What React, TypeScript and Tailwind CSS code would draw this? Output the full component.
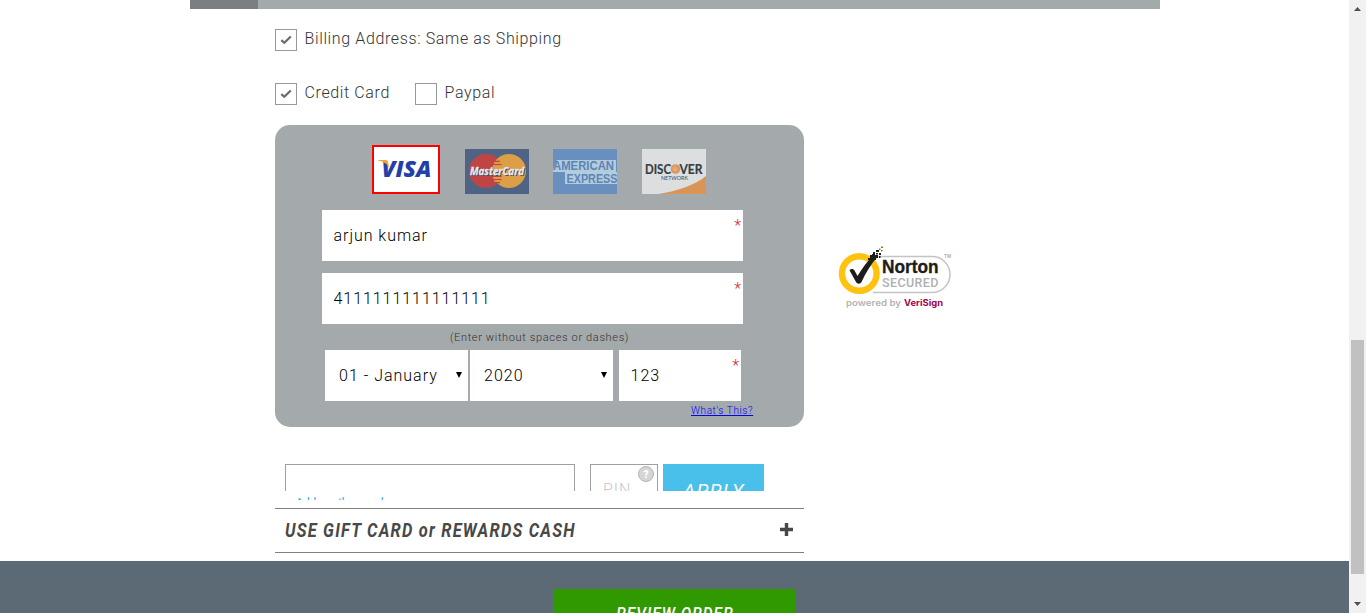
import React from "react";

function CheckBox({ checked = false, label }: { checked?: boolean; label: string }) {
  return (
    <div className="flex h-[22px] items-start gap-2">
      <span className="flex size-[22px] items-center justify-center border border-[#999] bg-white">
        {checked && (
          <svg width="12" height="10" viewBox="0 0 12 10">
            <path d="M1.300 5.200 4.300 7.800 10.800 1.500" fill="none" stroke="#6b6b6b" strokeWidth="2.200" />
          </svg>
        )}
      </span>
      <span className="-mt-px -ml-[0.500px] text-base leading-[22px] font-light tracking-[0.63px] text-[#333]">{label}</span>
    </div>
  );
}

function Visa() {
  return (
    <svg width="64" height="45" viewBox="0 0 64 45">
      <rect width="64" height="45" fill="#fff" />
      <text x="7.500" y="30" textLength="50" lengthAdjust="spacingAndGlyphs" fontFamily="Open Sans" fontWeight="800" fontStyle="italic" fontSize="23" fill="#2340a8">VISA</text>
      <path d="M4 13h7.500c1.500 0 2.200.7 2.500 2l1.200 6c-1.700-3.500-5.200-6.500-11.200-7.500z" fill="#f0a431" />
    </svg>
  );
}

function MasterCard() {
  return (
    <svg width="64" height="45" viewBox="0 0 64 45">
      <rect width="64" height="45" fill="#4f6384" />
      <circle cx="21" cy="22" r="17" fill="#bf4545" />
      <circle cx="44" cy="22" r="17" fill="#dc9f48" />
      <path d="M29 12.500h6M27.500 15.500h9M27.500 27.500h9M27.500 30.500h9M29 33.500h6" stroke="#bf4545" strokeWidth="1.400" />
      <path d="M29.500 14h6M28 17h8M28 29h8M29 32h6" stroke="#dc9f48" strokeWidth="1.300" />
      <g fontFamily="Open Sans" fontWeight="700" fontStyle="italic" fontSize="10.800">
        <text x="6" y="27" textLength="54" lengthAdjust="spacingAndGlyphs" fill="#384466">MasterCard</text>
        <text x="5" y="26" textLength="54" lengthAdjust="spacingAndGlyphs" fill="#e8e8ec" stroke="#e8e8ec" strokeWidth=".3">MasterCard</text>
      </g>
    </svg>
  );
}

function Amex() {
  return (
    <svg width="64" height="45" viewBox="0 0 64 45">
      <rect width="64" height="45" fill="#688fbd" />
      <path d="M0 20.500 4 11H63V23H0zM12 23H64V35H12z" fill="#b3ccdd" />
      <g fontFamily="Liberation Sans" fontWeight="700" fontSize="12" fill="#5c85b6">
        <text x="0" y="21.300" textLength="61" lengthAdjust="spacingAndGlyphs">AMERICAN</text>
        <text x="13.500" y="33.500" textLength="51" lengthAdjust="spacingAndGlyphs">EXPRESS</text>
      </g>
    </svg>
  );
}

function Discover() {
  return (
    <svg width="64" height="45" viewBox="0 0 64 45">
      <rect width="64" height="45" fill="#dcdee0" />
      <path d="M16 45C36 42 53 36 64 27V45z" fill="#d99557" />
      <circle cx="33.500" cy="20" r="4.800" fill="#dc965e" />
      <circle cx="33" cy="20" r="2.500" fill="#e2aa7e" />
      <g fontFamily="Lato" fontWeight="700" fontSize="12.500" fill="#363e44" stroke="#363e44" strokeWidth=".2">
        <text x="3" y="24.500" textLength="26" lengthAdjust="spacingAndGlyphs">DISC</text>
        <text x="37.500" y="24.500" textLength="23" lengthAdjust="spacingAndGlyphs">VER</text>
      </g>
      <text x="19" y="30.500" textLength="27" lengthAdjust="spacingAndGlyphs" fontFamily="Lato" fontSize="5" fill="#42484c">NETWORK</text>
    </svg>
  );
}

function NortonSeal() {
  return (
    <svg width="116" height="66" viewBox="0 0 116 66">
      <path d="M40 11.500H95a18 18 0 0 1 0 36H36" fill="none" stroke="#c4c4c4" strokeWidth="1.500" />
      <circle cx="22.300" cy="28.500" r="17.300" fill="#fff" stroke="#ffc20e" strokeWidth="6.400" />
      <path d="M12.500 25.300c1.500-2 4-1.800 5 .3l3 5.500C25.500 23 30 16.500 36 11l3.500 2C34 19.500 29 27 24.500 37c-1 2.300-4.300 2.300-5.500 0z" fill="#1d1d1b" />
      <path d="M33 10h3v3h-3zM36 7h2v3h-2zM38 10h3v3h-3zM36 12h3v3h-3zM39 5h3v2h-3zM42 8h2v2h-2zM35 9h3v3h-3zM31 13h3v2h-3zM42 11h1.500v2H42zM39 8h2v1.500h-2z" fill="#1d1d1b" />
      <path d="M42 3.500h1.500V5H42zM44 1.500h2V3h-2zM44 5h1.500v1.500H44z" fill="#8f7930" />
      <text x="45" y="28" textLength="56.500" lengthAdjust="spacingAndGlyphs" fontFamily="Liberation Sans" fontWeight="700" fontSize="17.500" fill="#1d1d1b" stroke="#1d1d1b" strokeWidth=".35">Norton</text>
      <text x="45" y="41.500" textLength="56.500" fontFamily="Roboto" fontWeight="500" fontSize="12.500" fill="#b0b0b0">SECURED</text>
      <text x="107" y="13" fontFamily="Inter" fontSize="4.500" fill="#888">TM</text>
      <text x="9" y="61" textLength="55" lengthAdjust="spacingAndGlyphs" fontFamily="Inter" fontWeight="600" fontSize="9" fill="#b3b3b3">powered by</text>
      <text x="67" y="61" textLength="39" lengthAdjust="spacingAndGlyphs" fontFamily="Inter" fontWeight="700" fontSize="9" fill="#a3004b">VeriSign</text>
    </svg>
  );
}

function Field({ value, className }: { value: string; className: string }) {
  return (
    <div className={`relative flex h-[51px] items-center bg-white pl-[11.500px] text-base font-light text-black ${className}`}>
      {value}
      <span className="absolute top-[6px] right-px text-base leading-5 font-light text-[#d9232e]">*</span>
    </div>
  );
}

function Select({ value, className }: { value: string; className: string }) {
  return (
    <div className={`flex h-[51px] items-center justify-between bg-white pr-[6px] pl-[14px] text-base font-light text-black ${className}`}>
      {value}
      <svg width="6" height="6" viewBox="0 0 6 6" className="-mt-px">
        <path d="M0 0h6L3 6z" fill="#000" />
      </svg>
    </div>
  );
}

function ScrollBar() {
  return (
    <div className="flex h-full w-[17px] flex-col items-center bg-[#f1f1f1]">
      <svg width="7" height="4" viewBox="0 0 7 4" className="mt-[7px]">
        <path d="M0 4 3.500 0 7 4z" fill="#505050" />
      </svg>
      <div className="mt-[329px] h-[234px] w-[13px] bg-[#c1c1c1]" />
      <svg width="7" height="4" viewBox="0 0 7 4" className="mt-7">
        <path d="M0 0h7L3.500 4z" fill="#505050" />
      </svg>
    </div>
  );
}

export default function App() {
  return (
    <div className="flex h-[613px] w-[1366px] overflow-hidden bg-white font-['Roboto',sans-serif]">
      <main className="flex h-full w-[1349px] flex-col">
        <div className="ml-[190px] flex h-[9px] w-[970px] shrink-0 bg-[#a4a9ac]">
          <div className="w-[68px] bg-[#7b7f81]" />
        </div>

        <div className="ml-[275px] flex h-[552px] shrink-0">
          <section className="flex w-[529px] flex-col pt-5">
            <CheckBox checked label="Billing Address: Same as Shipping" />
            <div className="mt-8 flex">
              <div className="w-[140px]"><CheckBox checked label="Credit Card" /></div>
              <CheckBox label="Paypal" />
            </div>

            <div className="mt-5 flex h-[302px] flex-col rounded-[15px] bg-[#a4a9ac] pt-5">
              <div className="ml-[97px] flex h-[49px] items-end">
                <div className="size-fit border-2 border-[#f00]"><Visa /></div>
                <div className="ml-[25px]"><MasterCard /></div>
                <div className="ml-6"><Amex /></div>
                <div className="ml-[25px]"><Discover /></div>
              </div>
              <Field value="arjun kumar" className="mt-4 ml-[47px] w-[421px] tracking-[0.96px]" />
              <Field value="4111111111111111" className="mt-3 ml-[47px] w-[421px] tracking-[0.95px]" />
              <div className="mt-[6px] h-[20px] text-center text-[11px] leading-[16px] font-light tracking-[0.65px] text-[#333]">
                (Enter without spaces or dashes)
              </div>
              <div className="ml-[50px] flex">
                <Select value="01 - January" className="w-[143px] tracking-[1px]" />
                <Select value="2020" className="ml-[2px] w-[143px] tracking-[1px]" />
                <Field value="123" className="ml-[6px] w-[122px] tracking-[1px]" />
              </div>
              <a className="mt-[2px] ml-[416px] w-fit text-[10px] leading-4 font-light tracking-[0.6px] whitespace-nowrap text-[#0000ff] underline">What's This?</a>
            </div>

            <div className="mt-[37px] ml-[10px] flex h-[27px] items-start overflow-hidden">
              <div className="h-[51px] w-[290px] border border-[#a0a0a0]" />
              <div className="ml-[15px] flex h-[51px] w-[68px] shrink-0 justify-between border border-[#a0a0a0] pl-3">
                <span className="self-center pt-px text-base font-light tracking-[1px] text-[#c8c8c8]">PIN</span>
                <span className="mt-px mr-[3px] -ml-3 flex size-4 items-center justify-center rounded-full border border-[#b5b5b5] bg-[#d5d5d5] text-[10px] font-black text-white">?</span>
              </div>
              <div className="ml-[5px] flex h-[51px] w-[101px] items-center justify-center bg-[#48c0ea] pt-[3px] pl-px text-[19px] tracking-[1.500px] text-white italic">APPLY</div>
            </div>
            <div className="ml-[20.500px] h-[9px] overflow-hidden pt-1 text-[12px] leading-[17px] tracking-[-0.25px] text-[#2cabe0]">Add another card</div>

            <div className="mt-2 flex h-[45px] items-center justify-between border-y border-[#808080] pr-[11px] pl-[9.500px] text-[#484848]">
              <span className="-mt-0.5 w-[292px] text-[20px] font-bold whitespace-nowrap italic">
                <span className="inline-block origin-left scale-x-[0.82] tracking-[1.480px]">USE GIFT CARD or REWARDS CASH</span>
              </span>
              <svg width="13" height="13" viewBox="0 0 13 13" className="-mt-0.5">
                <path d="M6.500 0v13M0 6.500h13" stroke="#484848" strokeWidth="3.400" />
              </svg>
            </div>
          </section>
          <aside className="pt-[236px] pl-[33px]"><NortonSeal /></aside>
        </div>

        <footer className="flex h-[52px] shrink-0 justify-center overflow-hidden bg-[#5c6a75] pt-[28px]">
          <button className="flex h-[51px] w-[243px] items-center justify-center bg-[#309900] text-[18.500px] text-white italic">
            <span className="inline-block scale-x-[0.84] font-medium tracking-[1.200px] whitespace-nowrap">REVIEW ORDER</span>
          </button>
        </footer>
      </main>
      <ScrollBar />
    </div>
  );
}
